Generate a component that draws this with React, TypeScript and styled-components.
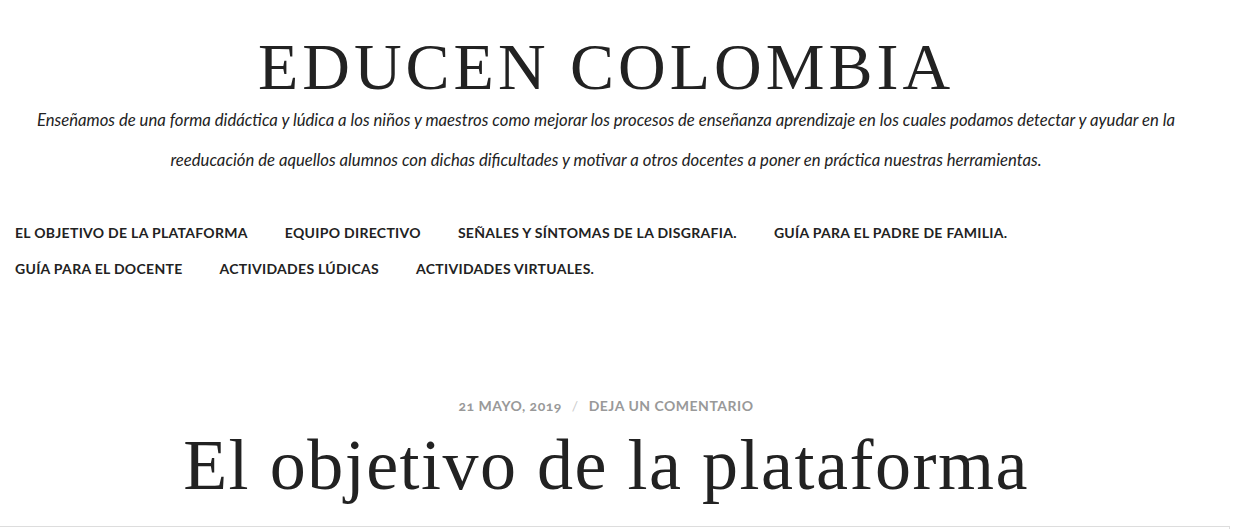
import React from "react";
import styled, { createGlobalStyle } from "styled-components";

const Global = createGlobalStyle`
  html, body { margin: 0; padding: 0; background: #fff; }
  body { font-family: "Lato", "Liberation Sans", sans-serif; color: #222; }
`;

const Page = styled.div`
  width: 1212px;
  display: flex;
  flex-direction: column;
`;

const Header = styled.header`
  display: flex;
  flex-direction: column;
  align-items: center;
  padding-top: 34px;
`;

const SiteTitle = styled.h1`
  margin: 0;
  font-family: "Liberation Serif", "Times New Roman", serif;
  font-weight: 400;
  font-size: 66px;
  line-height: 66px;
  letter-spacing: 4px;
  color: #222;
`;

const Tagline = styled.p`
  margin: 0;
  padding: 0 30px;
  text-align: center;
  font-family: "Lato", sans-serif;
  font-style: italic;
  font-size: 16.7px;
  line-height: 40px;
  color: #222;
`;

const Nav = styled.nav`
  display: flex;
  flex-wrap: wrap;
  column-gap: 37px;
  max-width: 1100px;
  padding: 35px 0 0 15px;
`;

const NavItem = styled.a`
  font-family: "Lato", sans-serif;
  font-weight: 700;
  font-size: 14px;
  line-height: 36px;
  letter-spacing: 0.3px;
  text-transform: uppercase;
  color: #222;
  text-decoration: none;
`;

const Article = styled.article`
  display: flex;
  flex-direction: column;
  align-items: center;
  padding-top: 109px;
`;

const Meta = styled.div`
  display: flex;
  gap: 10px;
  font-family: "Lato", sans-serif;
  font-weight: 700;
  font-size: 14px;
  line-height: 20px;
  letter-spacing: 0.5px;
  text-transform: uppercase;
  color: #999;
  font-variant-numeric: oldstyle-nums;
`;

const Sep = styled.span`
  color: #ccc;
  font-weight: 400;
`;

const PostTitle = styled.h2`
  margin: 6px 0 0;
  font-family: "Liberation Serif", "Times New Roman", serif;
  font-weight: 400;
  font-size: 72px;
  line-height: 86px;
  letter-spacing: 1.5px;
  color: #222;
`;

const ContentBox = styled.div`
  margin-top: 18px;
  width: 1230px;
  height: 40px;
  border-top: 1px solid #ddd;
  border-right: 1px solid #ddd;
  box-sizing: border-box;
`;

const navItems = [
  "El objetivo de la plataforma",
  "Equipo directivo",
  "Señales y síntomas de la disgrafia.",
  "Guía para el padre de familia.",
  "Guía para el docente",
  "Actividades lúdicas",
  "Actividades virtuales.",
];

export default function App() {
  return (
    <>
      <Global />
      <Page>
        <Header>
          <SiteTitle>EDUCEN COLOMBIA</SiteTitle>
          <Tagline>
            Enseñamos de una forma didáctica y lúdica a los niños y maestros como mejorar los procesos de enseñanza aprendizaje en los cuales podamos detectar y ayudar en la reeducación de aquellos alumnos con dichas dificultades y motivar a otros docentes a poner en práctica nuestras herramientas.
          </Tagline>
        </Header>
        <Nav>
          {navItems.map((n) => (
            <NavItem key={n} href="#">{n}</NavItem>
          ))}
        </Nav>
        <Article>
          <Meta>
            <span>21 Mayo, 2019</span>
            <Sep>/</Sep>
            <span>Deja un comentario</span>
          </Meta>
          <PostTitle>El objetivo de la plataforma</PostTitle>
        </Article>
        <ContentBox />
      </Page>
    </>
  );
}
